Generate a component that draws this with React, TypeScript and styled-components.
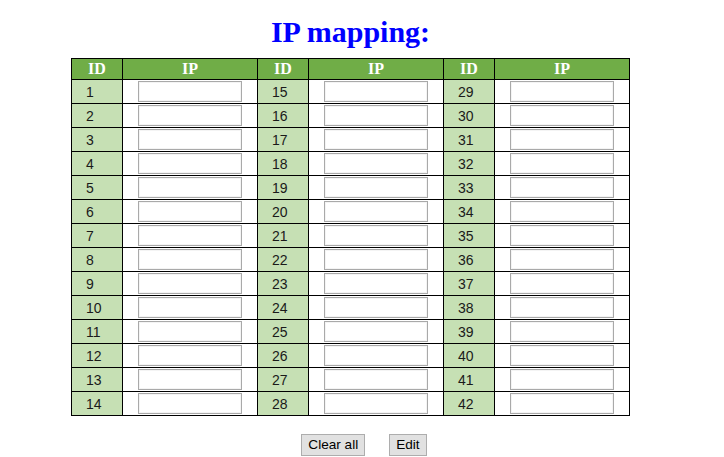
import React from "react";
import styled, { createGlobalStyle } from "styled-components";

const Global = createGlobalStyle`
  html, body { margin: 0; padding: 0; background: #fff; }
  body { font-family: "Liberation Serif", "Times New Roman", serif; }
`;

const Page = styled.div`
  width: 701px;
  display: flex;
  flex-direction: column;
  align-items: center;
`;

const Title = styled.h1`
  margin: 14px 0 8px;
  font-family: "Liberation Serif", "Times New Roman", serif;
  font-size: 30px;
  line-height: 36px;
  font-weight: bold;
  color: #0000ff;
`;

const Grid = styled.table`
  border-collapse: collapse;
  table-layout: fixed;
`;

const HeadCell = styled.th<{ $wide?: boolean }>`
  width: ${(p) => (p.$wide ? "132px" : "48px")};
  background: #70ad47;
  color: #ffffff;
  border: 1px solid #000;
  padding: 1px;
  font-family: "Liberation Serif", "Times New Roman", serif;
  font-size: 16px;
  font-weight: bold;
  line-height: 18px;
  text-align: center;
`;

const IdCell = styled.td`
  background: #c6e0b4;
  border: 1px solid #000;
  padding: 1px 1px 1px 14px;
  font-family: "Liberation Sans", Arial, sans-serif;
  font-size: 14px;
  color: #1a1a1a;
  text-align: left;
  height: 21px;
`;

const IpCell = styled.td`
  background: #fff;
  border: 1px solid #000;
  padding: 1px;
  height: 21px;
`;

const IpInput = styled.input`
  display: block;
  box-sizing: border-box;
  width: 104px;
  height: 21px;
  margin: 0 auto;
  padding: 1px 2px;
  border: 1px solid #a9a9a9;
  box-shadow: inset 0 0 0 1px #f4f4f4;
  background: #fff;
  font-family: "Liberation Sans", Arial, sans-serif;
  font-size: 13px;
  outline: none;
`;

const Actions = styled.div`
  display: flex;
  gap: 24px;
  margin-top: 18px;
  padding-left: 27px;
`;

const Button = styled.button`
  box-sizing: border-box;
  height: 22px;
  padding: 0 6px;
  border: 1px solid #adadad;
  background: #e1e1e1;
  color: #000;
  font-family: "Liberation Sans", Arial, sans-serif;
  font-size: 13.6px;
  line-height: 18px;
  cursor: pointer;
`;

const rows = Array.from({ length: 14 }, (_, i) => i + 1);

export default function App() {
  return (
    <Page>
      <Global />
      <Title>IP mapping:</Title>
      <Grid>
        <thead>
          <tr>
            {[0, 1, 2].map((g) => (
              <React.Fragment key={g}>
                <HeadCell>ID</HeadCell>
                <HeadCell $wide>IP</HeadCell>
              </React.Fragment>
            ))}
          </tr>
        </thead>
        <tbody>
          {rows.map((r) => (
            <tr key={r}>
              {[0, 14, 28].map((off) => (
                <React.Fragment key={off}>
                  <IdCell>{r + off}</IdCell>
                  <IpCell>
                    <IpInput type="text" />
                  </IpCell>
                </React.Fragment>
              ))}
            </tr>
          ))}
        </tbody>
      </Grid>
      <Actions>
        <Button>Clear all</Button>
        <Button>Edit</Button>
      </Actions>
    </Page>
  );
}
